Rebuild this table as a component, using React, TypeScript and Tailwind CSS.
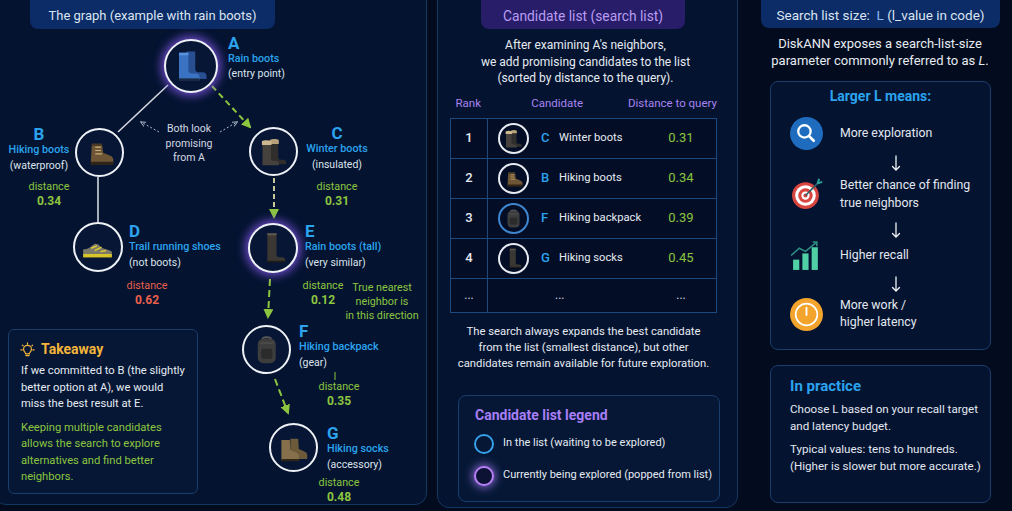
import React from "react";

type Kind = "rain" | "hiking" | "winter" | "trail" | "tall" | "pack" | "socks";

// little product drawings that sit inside the node circles
const Thing = ({ kind, className }: { kind: Kind; className?: string }) => {
  return (
    <svg viewBox="2 2 28 28" className={className}>
      {kind === "rain" && (
        <g>
          <path d="M12 4h7v14c0 1.5 1 2.5 2.5 2.5H25c2 0 3 1.2 3 3V26H12z" fill="#284f91" />
          <path d="M6 5h7.5v14c0 1.5 1 2.5 2.5 2.5h3.5c2 0 3 1.2 3 3V27H6z" fill="#3a73c4" />
          <rect x="6" y="5" width="7.5" height="2" fill="#5b92dd" />
          <rect x="6" y="25.5" width="16.5" height="2" fill="#1b2a44" />
        </g>
      )}
      {kind === "hiking" && (
        <g>
          <path d="M9 8h9l1 8 6 2.5c2 .8 3 2 3 3.5V25H8z" fill="#6e5535" />
          <path d="M8 24h20v3H8z" fill="#2e2418" />
          <path d="M12 11h5M12 14h5M12 17h6" stroke="#c9b27a" strokeWidth="0.9" />
          <path d="M9 8h9v2H9z" fill="#4a3a24" />
        </g>
      )}
      {kind === "winter" && (
        <g>
          <path d="M13 8h7v13c0 1 .8 2 2 2h2.5c1.8 0 2.5 1 2.5 2.5V27H13z" fill="#2f2e2c" />
          <path d="M6 9h7.5v13c0 1 .8 2 2 2h2.5c1.8 0 2.5 1 2.5 2.5V28H6z" fill="#45423d" />
          <path d="M12.5 5.5c2-1 6-1 8 0V9h-8z" fill="#b8a27a" />
          <path d="M5.5 6.5c2-1 6-1 8.5 0v3.5H5.5z" fill="#cdb78f" />
        </g>
      )}
      {kind === "trail" && (
        <g>
          <path d="M3 18c4 0 7-2.5 10-5l3 .5 3 3c3 1.5 7 1.5 9 3.5V23H3z" fill="#7c7b6a" />
          <path d="M3 22h25v3H3z" fill="#d8c52a" />
          <path d="M10 17l5-2M13 19l6-3M18 20l5-1" stroke="#e0cf2e" strokeWidth="1.2" />
        </g>
      )}
      {kind === "tall" && (
        <g>
          <path d="M11 3h8v19c0 1 .8 2 2 2h2.5c2 0 3 1 3 2.5V28H11z" fill="#3b3833" />
          <path d="M11 3h8v2h-8z" fill="#5a564e" />
          <path d="M11 27h15.5v1.5H11z" fill="#1e1c19" />
        </g>
      )}
      {kind === "pack" && (
        <g>
          <path d="M12 7c0-3 8-3 8 0" stroke="#5a5a5a" strokeWidth="1.5" fill="none" />
          <rect x="8" y="6" width="16" height="22" rx="5" fill="#3d3d3d" />
          <rect x="11" y="15" width="10" height="9" rx="2" fill="#2b2b2b" />
          <path d="M10 10h12" stroke="#555" strokeWidth="1" />
        </g>
      )}
      {kind === "socks" && (
        <g>
          <path d="M13 8h7l.5 9 4.5 2c2 .8 3 1.8 3 3.5V26H13z" fill="#6d5a3b" />
          <path d="M5 9h7.5l.5 9 4.5 2c2 .8 3 1.8 3 3.5V27H5z" fill="#85704b" />
          <path d="M5 26h16v2H5z" fill="#2f2619" />
        </g>
      )}
    </svg>
  );
};

const nodes: { kind: Kind; pos: string; glow?: boolean }[] = [
  { kind: "rain", pos: "left-[163px] top-[38px] w-[54px] h-[54px]", glow: true },
  { kind: "hiking", pos: "left-[74px] top-[127px] w-[49px] h-[49px]" },
  { kind: "winter", pos: "left-[248px] top-[126px] w-[49px] h-[49px]" },
  { kind: "trail", pos: "left-[72px] top-[221px] w-[50px] h-[50px]" },
  { kind: "tall", pos: "left-[247px] top-[222px] w-[50px] h-[50px]", glow: true },
  { kind: "pack", pos: "left-[241px] top-[324px] w-[49px] h-[49px]" },
  { kind: "socks", pos: "left-[268px] top-[422px] w-[49px] h-[49px]" },
];

const labels = [
  { pos: "left-[227px] top-[35px] leading-[15px]", l: "A", n: "Rain boots", s: "(entry point)" },
  { pos: "left-[0px] top-[125px] w-[76px] text-center leading-[16px]", l: "B", n: "Hiking boots", s: "(waterproof)" },
  { pos: "left-[296px] top-[124px] w-[80px] text-center leading-[16px]", l: "C", n: "Winter boots", s: "(insulated)" },
  { pos: "left-[128px] top-[222px] leading-[16px]", l: "D", n: "Trail running shoes", s: "(not boots)" },
  { pos: "left-[304px] top-[222px] leading-[16px]", l: "E", n: "Rain boots (tall)", s: "(very similar)" },
  { pos: "left-[298px] top-[322px] leading-[16px]", l: "F", n: "Hiking backpack", s: "(gear)" },
  { pos: "left-[326px] top-[424px] leading-[16px]", l: "G", n: "Hiking socks", s: "(accessory)" },
];

const distances = [
  { pos: "left-[8px] top-[178px]", v: "0.34", red: false },
  { pos: "left-[296px] top-[178px]", v: "0.31", red: false },
  { pos: "left-[106px] top-[277px]", v: "0.62", red: true },
  { pos: "left-[282px] top-[277px]", v: "0.12", red: false },
  { pos: "left-[298px] top-[378px]", v: "0.35", red: false },
  { pos: "left-[298px] top-[474px]", v: "0.48", red: false },
];

const Graph = () => {
  return (
    <div className="absolute left-[6px] top-[12px] w-[428px] h-[505px] pointer-events-none">
      <svg className="absolute inset-0" width="428" height="505">
        <defs>
          <marker id="gArrow" viewBox="0 0 10 10" refX="8" refY="5" markerWidth="5" markerHeight="5" orient="auto">
            <path d="M0 0L10 5L0 10z" fill="#8cc63f" />
          </marker>
          <marker id="wArrow" viewBox="0 0 10 10" refX="8" refY="5" markerWidth="6" markerHeight="6" orient="auto">
            <path d="M0 1L9 5L0 9" fill="none" stroke="#aab4c4" strokeWidth="1.5" />
          </marker>
        </defs>
        <line x1="167" y1="84" x2="117" y2="131" stroke="#d4d8de" strokeWidth="1.6" />
        <line x1="97" y1="176" x2="97" y2="221" stroke="#d4d8de" strokeWidth="1.6" />
        <line x1="211" y1="85" x2="249" y2="126" stroke="#8cc63f" strokeWidth="2" strokeDasharray="6 4" markerEnd="url(#gArrow)" />
        <line x1="273" y1="177" x2="273" y2="216" stroke="#c9c79a" strokeWidth="2" strokeDasharray="5 3" markerEnd="url(#gArrow)" />
        <line x1="269" y1="278" x2="267" y2="316" stroke="#8cc63f" strokeWidth="2" strokeDasharray="7 4" markerEnd="url(#gArrow)" />
        <line x1="274" y1="378" x2="287" y2="412" stroke="#8cc63f" strokeWidth="2" strokeDasharray="7 4" markerEnd="url(#gArrow)" />
        <line x1="158" y1="131" x2="140" y2="121" stroke="#aab4c4" strokeWidth="1" strokeDasharray="2 2" markerEnd="url(#wArrow)" />
        <line x1="219" y1="131" x2="236" y2="121" stroke="#aab4c4" strokeWidth="1" strokeDasharray="2 2" markerEnd="url(#wArrow)" />
        <line x1="334" y1="379" x2="334" y2="371" stroke="#8cc63f" strokeWidth="1" />
      </svg>

      {nodes.map((n, i) => (
        <div
          key={i}
          className={`absolute ${n.pos} rounded-full border-2 border-[#eef1f6] bg-[#061634] flex items-center justify-center ${
            n.glow ? "shadow-[0_0_10px_3px_rgba(139,92,246,0.75)]" : ""
          }`}
        >
          <Thing kind={n.kind} className="w-[70%] h-[70%]" />
        </div>
      ))}

      {labels.map((l, i) => (
        <div key={i} className={`absolute ${l.pos} whitespace-nowrap`}>
          <div className="text-[17px] font-bold text-[#2ba3ee]">{l.l}</div>
          <div className="text-[10.75px] font-medium text-[#2ba3ee]">{l.n}</div>
          <div className="text-[10.5px] text-[#dde3ec]">{l.s}</div>
        </div>
      ))}

      {distances.map((d, i) => (
        <div key={i} className={`absolute ${d.pos} w-[80px] text-center leading-[15px]`}>
          <div className={`text-[10.75px] ${d.red ? "text-[#e8604c]" : "text-[#8cc63f]"}`}>distance</div>
          <div className={`text-[12px] font-bold ${d.red ? "text-[#e8604c]" : "text-[#8cc63f]"}`}>{d.v}</div>
        </div>
      ))}

      <div className="absolute left-[148px] top-[121px] w-[80px] text-center text-[10.5px] leading-[14.5px] text-[#d3d9e2]">
        Both look
        <br />
        promising
        <br />
        from A
      </div>
      <div className="absolute left-[331px] top-[280px] w-[100px] text-center text-[10.75px] leading-[14px] text-[#8cc63f]">
        True nearest
        <br />
        neighbor is
        <br />
        in this direction
      </div>
    </div>
  );
};

const Bulb = () => (
  <svg viewBox="0 0 16 16" className="w-[15px] h-[15px]" fill="none" stroke="#f4b63a" strokeWidth="1.3" strokeLinecap="round">
    <path d="M8 1v1.3M2.5 3.3l.9.9M13.5 3.3l-.9.9M1 8.5h1.3M13.7 8.5H15" />
    <path d="M5.3 11c-1-1-1.5-2-1.5-3.2a4.2 4.2 0 018.4 0c0 1.2-.5 2.2-1.5 3.2-.5.5-.7 1-.7 1.6H6c0-.6-.2-1.1-.7-1.6z" />
    <path d="M6.3 14.5h3.4" />
  </svg>
);

const rows: { r: string; kind: Kind; l: string; n: string; d: string; blue?: boolean }[] = [
  { r: "1", kind: "winter", l: "C", n: "Winter boots", d: "0.31" },
  { r: "2", kind: "hiking", l: "B", n: "Hiking boots", d: "0.34" },
  { r: "3", kind: "pack", l: "F", n: "Hiking backpack", d: "0.39", blue: true },
  { r: "4", kind: "tall", l: "G", n: "Hiking socks", d: "0.45" },
];

const SearchIcon = () => (
  <svg viewBox="0 0 32 32" className="w-[33px] h-[33px] shrink-0">
    <circle cx="16" cy="16" r="16" fill="#1f6cbf" />
    <circle cx="14" cy="14" r="6" fill="none" stroke="#fff" strokeWidth="2.2" />
    <line x1="18.5" y1="18.5" x2="23" y2="23" stroke="#fff" strokeWidth="2.6" strokeLinecap="round" />
  </svg>
);

const TargetIcon = () => (
  <svg viewBox="0 0 32 32" className="w-[33px] h-[33px] shrink-0">
    <circle cx="15" cy="17" r="13" fill="#d9453f" />
    <circle cx="15" cy="17" r="10" fill="#fff" />
    <circle cx="15" cy="17" r="7" fill="#d9453f" />
    <circle cx="15" cy="17" r="4" fill="#fff" />
    <circle cx="15" cy="17" r="2" fill="#d9453f" />
    <line x1="15" y1="17" x2="27" y2="5" stroke="#2b5f66" strokeWidth="1.6" />
    <path d="M27 5l1-3.5M27 5l3.5-1" stroke="#2aa198" strokeWidth="2" strokeLinecap="round" />
  </svg>
);

const ChartIcon = () => (
  <svg viewBox="0 0 32 32" className="w-[33px] h-[33px] shrink-0">
    <rect x="3" y="20" width="6" height="10" fill="#4fd1a5" />
    <rect x="12" y="14" width="6" height="16" fill="#4fd1a5" />
    <rect x="21" y="8" width="6" height="22" fill="#4fd1a5" />
    <polyline points="1,16 9,9 15,12 26,3" fill="none" stroke="#2f8f83" strokeWidth="1.5" />
    <path d="M22 3h4v4" fill="none" stroke="#2f8f83" strokeWidth="1.5" />
  </svg>
);

const ClockIcon = () => (
  <svg viewBox="0 0 32 32" className="w-[33px] h-[33px] shrink-0">
    <circle cx="16" cy="16" r="16" fill="#f2a42c" />
    <circle cx="16" cy="16" r="10.5" fill="#f2a42c" stroke="#fff" strokeWidth="1.6" />
    <line x1="16" y1="9.5" x2="16" y2="16.5" stroke="#fff" strokeWidth="1.8" strokeLinecap="round" />
  </svg>
);

const Arrow = ({ cls }: { cls: string }) => (
  <div className={`${cls} flex justify-center pl-[12px]`}>
    <svg viewBox="0 0 10 16" className="w-[10px] h-[16px]" fill="none" stroke="#eef2f7" strokeWidth="1.3" strokeLinecap="round">
      <path d="M5 1v14M1.5 11.5L5 15l3.5-3.5" />
    </svg>
  </div>
);

export default function App() {
  return (
    <div className="w-[1012px] h-[511px] overflow-hidden bg-[#030b1e] font-['Roboto',sans-serif] text-[#e3e8f0]">
      <div className="flex items-start -mt-[12px] -ml-[6px]">
        {/* left: the graph */}
        <div className="relative w-[433px] h-[517px] rounded-xl border border-[#15375f] bg-[#041330] flex flex-col">
          <div className="ml-[35px] w-[245px] h-[40px] pt-[14px] rounded-lg bg-[#0b2c66] flex items-center justify-center text-[13px] text-[#dbe4f2]">
            The graph (example with rain boots)
          </div>
          <Graph />
          <div className="mt-auto mb-[10px] ml-[13px] w-[190px] h-[165px] rounded-md border border-[#1b3d6b] bg-[#051735] pt-[9px] px-[12px] whitespace-nowrap">
            <div className="flex items-center gap-[6px] h-[20px] -ml-[1px]">
              <Bulb />
              <span className="text-[14px] font-bold text-[#f4b63a]">Takeaway</span>
            </div>
            <p className="mt-[4px] text-[11.2px] leading-[16.5px] text-[#e6ebf2]">
              If we committed to B (the slightly
              <br />
              better option at A), we would
              <br />
              miss the best result at E.
            </p>
            <p className="mt-[7px] text-[11.2px] leading-[16.5px] text-[#8cc63f]">
              Keeping multiple candidates
              <br />
              allows the search to explore
              <br />
              alternatives and find better
              <br />
              neighbors.
            </p>
          </div>
        </div>

        {/* middle: candidate list */}
        <div className="ml-[10px] w-[301px] h-[520px] rounded-xl border border-[#15375f] bg-[#041330] flex flex-col">
          <div className="ml-[43px] w-[204px] h-[40px] pt-[14px] rounded-lg bg-[#271d68] flex items-center justify-center text-[13.8px] text-[#b99cf3]">
            Candidate list (search list)
          </div>
          <p className="mt-[8px] text-center text-[12px] leading-[16.5px] text-[#e6ebf2] pr-[4px]">
            After examining A's neighbors,
            <br />
            we add promising candidates to the list
            <br />
            (sorted by distance to the query).
          </p>
          <div className="ml-[12px] w-[267px]">
            <div className="mt-[7px] h-[20px] flex items-center text-[11.5px] text-[#a883f1] whitespace-nowrap">
              <span className="w-[37px] text-center">Rank</span>
              <span className="w-[143px] text-center">Candidate</span>
              <span className="flex-1 text-center">Distance to query</span>
            </div>
            <div className="mt-[4px] border border-[#1d4a7e] bg-[#030e26]">
              {rows.map((r) => (
                <div key={r.r} className="h-[40px] flex items-center border-b border-[#1d4a7e] whitespace-nowrap">
                  <div className="w-[37px] h-full border-r border-[#1d4a7e] flex items-center justify-center text-[13px] font-medium">
                    {r.r}
                  </div>
                  <div
                    className={`ml-[10px] w-[31px] h-[31px] shrink-0 rounded-full border-2 ${
                      r.blue ? "border-[#3f86d0]" : "border-[#e8ecf2]"
                    } flex items-center justify-center`}
                  >
                    <Thing kind={r.kind} className="w-[21px] h-[21px]" />
                  </div>
                  <span className="ml-[12px] w-[18px] text-[13px] font-medium text-[#2ba3ee]">{r.l}</span>
                  <span className="text-[11.2px] text-[#e6ebf2]">{r.n}</span>
                  <span className="ml-auto w-[70px] text-center text-[13px] text-[#8cc63f]">{r.d}</span>
                </div>
              ))}
              <div className="h-[33px] flex items-center text-[12px] text-[#cfd6e0]">
                <div className="w-[37px] h-full border-r border-[#1d4a7e] flex items-center justify-center">...</div>
                <span className="ml-[67px]">...</span>
                <span className="ml-auto w-[70px] text-center">...</span>
              </div>
            </div>
          </div>
          <p className="mt-[11px] text-center text-[11.3px] leading-[16px] text-[#e6ebf2] pr-[8px] whitespace-nowrap">
            The search always expands the best candidate
            <br />
            from the list (smallest distance), but other
            <br />
            candidates remain available for future exploration.
          </p>
          <div className="mt-[23px] ml-[20px] w-[262px] h-[107px] rounded-lg border border-[#1b3d6b] bg-[#051735] pt-[10px] pl-[15px] whitespace-nowrap">
            <div className="pl-[1px] text-[14px] leading-[18px] font-bold text-[#a77ef5]">Candidate list legend</div>
            <div className="mt-[10px] flex items-center gap-[9px] h-[20px]">
              <span className="w-[20px] h-[20px] shrink-0 rounded-full border-2 border-[#36a0ea]" />
              <span className="text-[11px] text-[#e6ebf2]">In the list (waiting to be explored)</span>
            </div>
            <div className="mt-[12px] flex items-center gap-[9px] h-[20px]">
              <span className="w-[20px] h-[20px] shrink-0 rounded-full border-2 border-[#b67ff7] bg-[#0b1233] shadow-[0_0_8px_2px_rgba(167,126,245,0.7)]" />
              <span className="text-[11px] text-[#e6ebf2]">Currently being explored (popped from list)</span>
            </div>
          </div>
        </div>

        {/* right: search list size */}
        <div className="ml-[17px] w-[250px] flex flex-col">
          <div className="ml-[6px] w-[239px] h-[40px] pt-[14px] rounded-lg bg-[#0b2c66] flex items-center justify-center text-[13.5px] text-[#dbe4f2] whitespace-pre">
            {"Search list size:  "}
            <span className="text-[#8cb8f5]">L</span>
            {" (l_value in code)"}
          </div>
          <p className="mt-[7px] text-center text-[13px] leading-[17px] text-[#e6ebf2]">
            DiskANN exposes a search-list-size
            <br />
            parameter commonly referred to as <span className="italic">L</span>.
          </p>
          <div className="mt-[12px] ml-[15px] w-[221px] h-[269px] rounded-lg border border-[#1b3d6b] bg-[#041330] pt-[5px] pl-[19px] whitespace-nowrap">
            <div className="text-center pr-[19px] text-[14px] leading-[18px] font-bold text-[#2ba3ee]">Larger L means:</div>
            <div className="mt-[12px] h-[32px] flex items-center gap-[17px]">
              <SearchIcon />
              <span className="text-[12.3px]">More exploration</span>
            </div>
            <Arrow cls="h-[27px] items-center" />
            <div className="h-[36px] flex items-center gap-[17px]">
              <TargetIcon />
              <span className="text-[12.3px] leading-[18px]">
                Better chance of finding
                <br />
                true neighbors
              </span>
            </div>
            <Arrow cls="h-[27px] items-end pb-[1px]" />
            <div className="h-[32px] flex items-center gap-[17px]">
              <ChartIcon />
              <span className="text-[12.3px]">Higher recall</span>
            </div>
            <Arrow cls="h-[26px] items-center" />
            <div className="h-[34px] flex items-center gap-[17px]">
              <ClockIcon />
              <span className="text-[12.3px] leading-[17px]">
                More work /
                <br />
                higher latency
              </span>
            </div>
          </div>
          <div className="mt-[15px] ml-[15px] w-[221px] h-[138px] rounded-lg border border-[#1b3d6b] bg-[#041330] pt-[10px] pl-[19px] whitespace-nowrap">
            <div className="text-[15px] leading-[20px] font-bold text-[#2ba3ee]">In practice</div>
            <p className="mt-[5px] text-[11.6px] leading-[17px]">
              Choose L based on your recall target
              <br />
              and latency budget.
            </p>
            <p className="mt-[6px] text-[11.6px] leading-[17px]">
              Typical values: tens to hundreds.
              <br />
              (Higher is slower but more accurate.)
            </p>
          </div>
        </div>
      </div>
    </div>
  );
}
